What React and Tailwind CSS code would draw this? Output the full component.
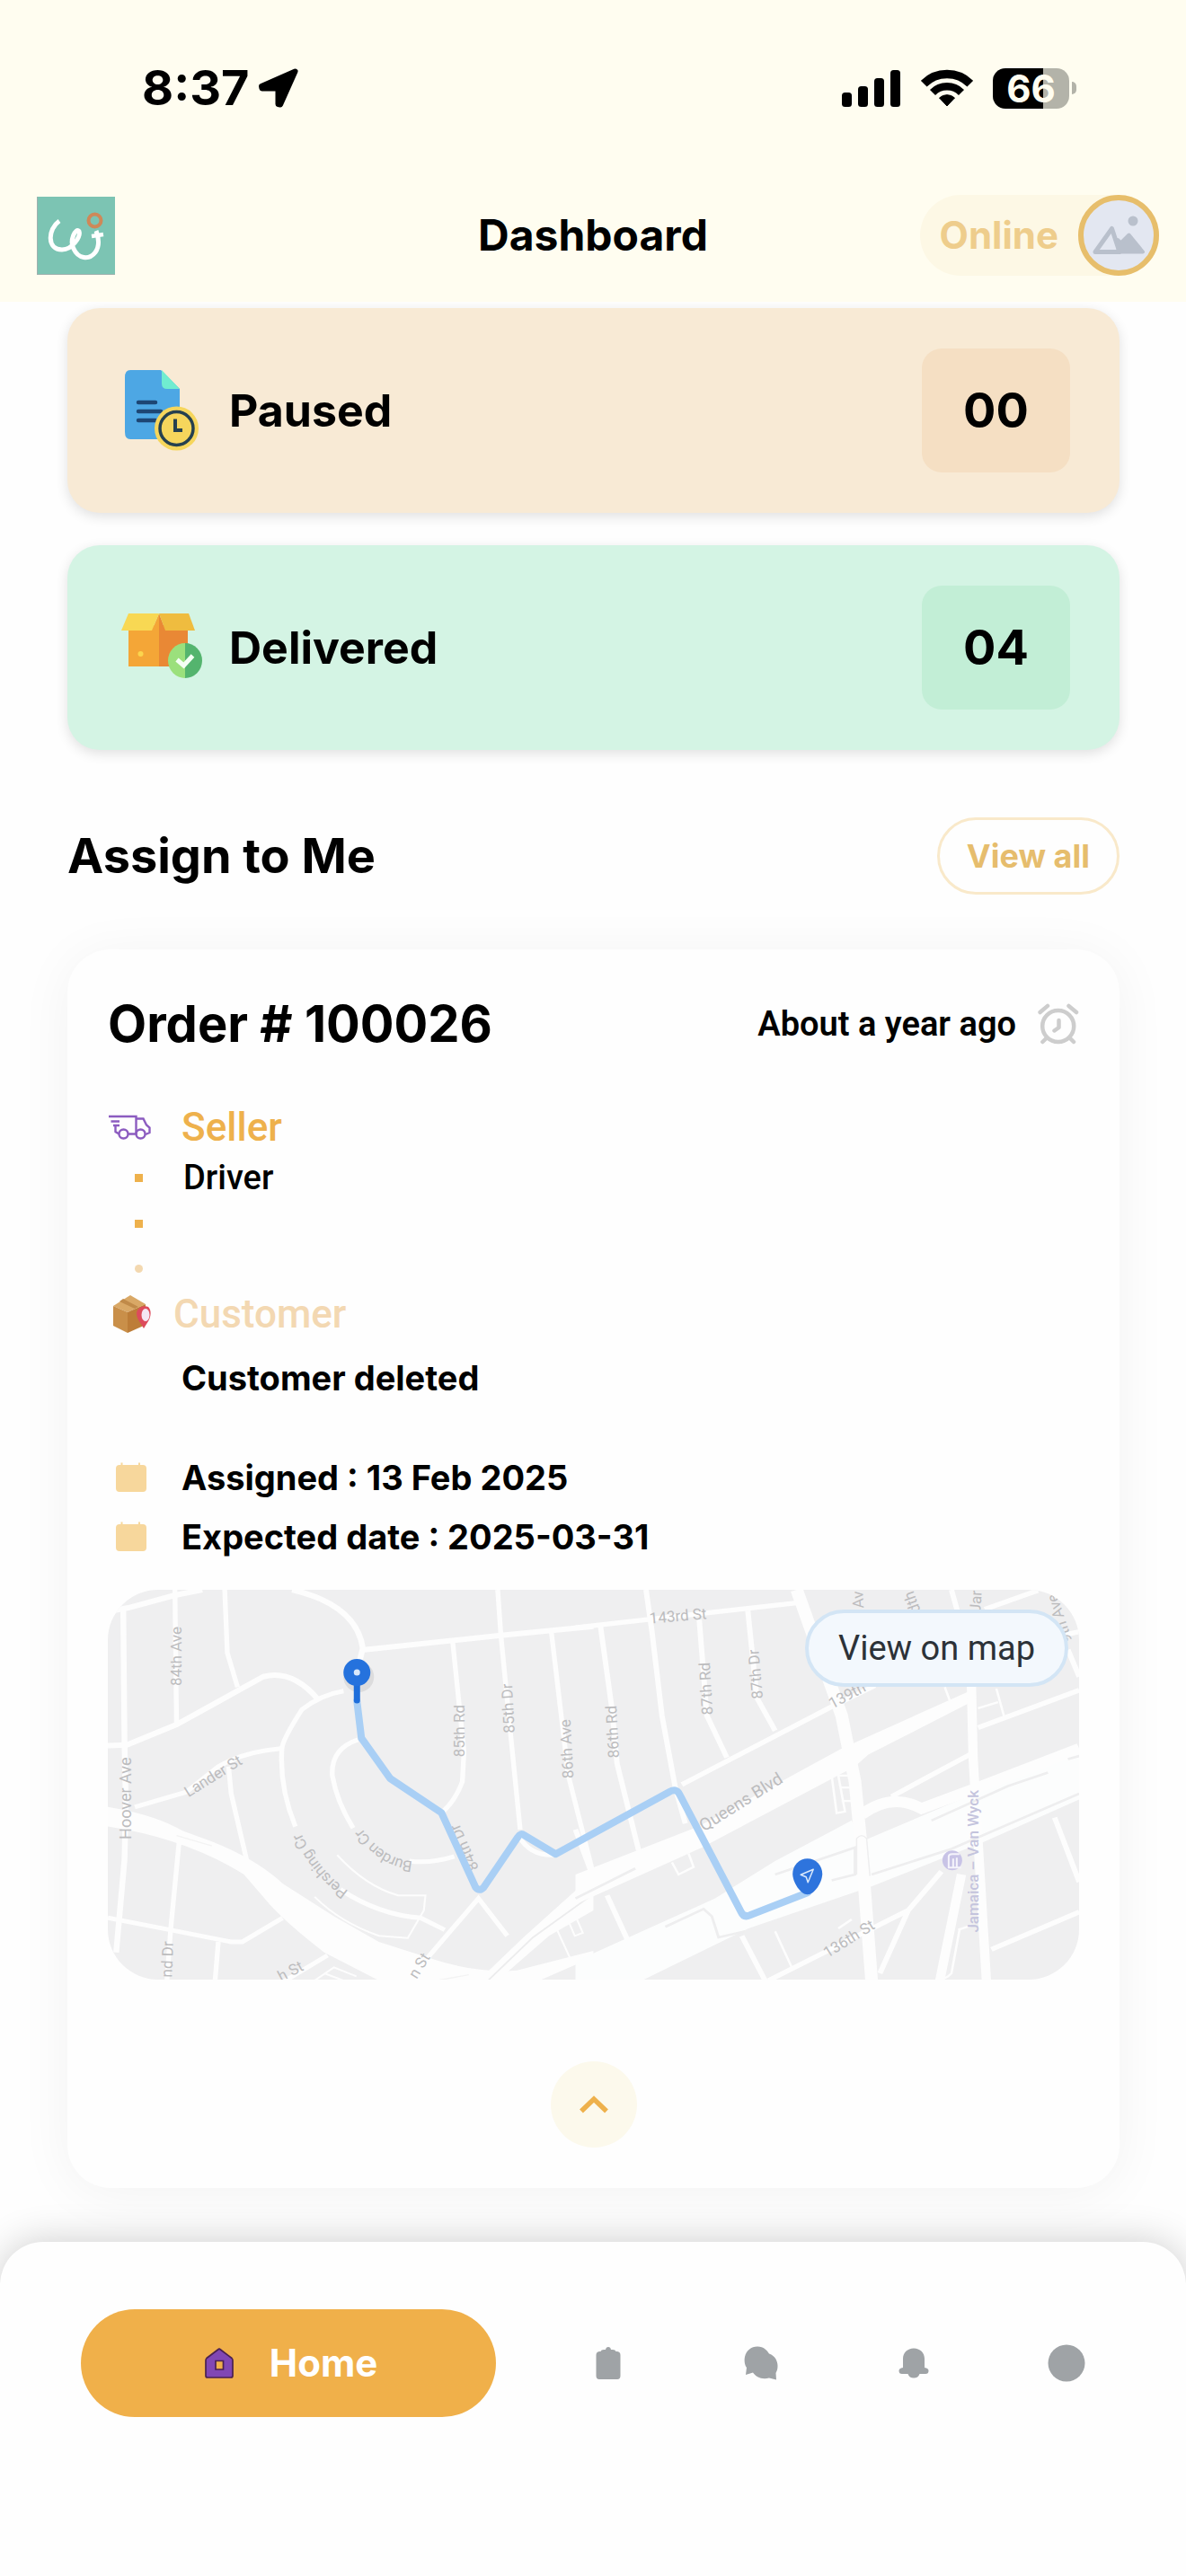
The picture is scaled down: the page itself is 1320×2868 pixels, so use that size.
import React from "react";

function LocationArrow() {
  return (
    <svg className="size-[46px]" viewBox="0 0 46 46" aria-hidden="true">
      <path d="M41.5 4.5 L4 21 L4.5 23.5 L22.5 23.5 L22.5 41 L25 41.5 Z" fill="#000" stroke="#000" strokeWidth="6" strokeLinejoin="round" />
    </svg>
  );
}

function SignalIcon() {
  return (
    <svg className="h-[42px] w-[66px]" viewBox="0 0 66 42" aria-hidden="true">
      <rect x="0" y="26" width="11" height="16" rx="3.5" />
      <rect x="18" y="19" width="11" height="23" rx="3.5" />
      <rect x="36" y="10" width="11" height="32" rx="3.5" />
      <rect x="54" y="1" width="11" height="41" rx="3.5" />
    </svg>
  );
}

function WifiIcon() {
  return (
    <svg className="h-[42px] w-[58px]" viewBox="0 0 58 42" fill="none" stroke="#000" aria-hidden="true">
      <path d="M3.2 16.2 A36.5 36.5 0 0 1 54.8 16.2" strokeWidth="9.5" />
      <path d="M13 26 A22.6 22.6 0 0 1 45 26" strokeWidth="8.5" />
      <path d="M29 41 L20.5 32 A12.5 12.5 0 0 1 37.5 32 Z" fill="#000" strokeWidth="1" />
    </svg>
  );
}

function Logo() {
  return (
    <svg className="ml-[11px] size-[87px]" viewBox="0 0 87 87" fill="none" role="img" aria-label="Logo">
      <rect width="87" height="87" fill="#7cc4b3" />
      <path d="M0 86.5 H87 M0.5 0 V87" stroke="#9fb0ae" />
      <path d="M25 27 C12 36 11 59 28 59 C40 59 49 44 47 38.5 C43 34 36 49 41 58 C46 69 58 71 65 62 C70 55 69 46 66 38" stroke="#fff" strokeWidth="5" />
      <path d="M61 44 L74 42" stroke="#fff" strokeWidth="4.5" />
      <circle cx="64.5" cy="26.5" r="7" stroke="#cf8858" strokeWidth="4" />
    </svg>
  );
}

function AvatarPicture() {
  return (
    <svg className="size-[90px]" viewBox="0 0 90 90" aria-hidden="true">
      <circle cx="45" cy="45" r="42" fill="#e3e7f1" stroke="#e7be6b" strokeWidth="6" />
      <circle cx="61" cy="29" r="5.5" fill="#b9c0cc" />
      <path d="M19 63.5 L37.5 37.5 L46 63.5 Z" fill="none" stroke="#b9c0cc" strokeWidth="5" strokeLinejoin="round" />
      <path d="M45 63.5 L44 50 L47.5 53.5 L56.5 44.5 L72 63.5 Z" fill="#b9c0cc" stroke="#b9c0cc" strokeWidth="4" strokeLinejoin="round" />
    </svg>
  );
}

function PausedIcon() {
  return (
    <svg className="h-[90px] w-[90px]" viewBox="0 0 90 90" aria-hidden="true">
      <path d="M10 0 H44 L65 21 V70 Q65 77 58 77 H10 Q4 77 4 69 V8 Q4 0 10 0 Z" fill="#4da7e4" />
      <path d="M45 0 L65 21 H51 Q45 21 45 15 Z" fill="#70ecd0" />
      <path d="M19 36 H38 M19 46 H44 M19 56 H38" stroke="#1d4674" strokeWidth="4.5" strokeLinecap="round" />
      <circle cx="61.5" cy="65" r="24.5" fill="#f6d65c" />
      <circle cx="61.5" cy="65" r="18.5" fill="none" stroke="#26414f" strokeWidth="3.5" />
      <path d="M60 54.5 V67 H68" fill="none" stroke="#26414f" strokeWidth="4" />
    </svg>
  );
}

function DeliveredIcon() {
  return (
    <svg className="h-[90px] w-[90px]" viewBox="0 0 90 90" aria-hidden="true">
      <g transform="translate(0 6)">
        <path d="M8 14 H42 V60 H8 Z" fill="#f4a637" />
        <path d="M42 14 H74 V60 H42 Z" fill="#e98835" />
        <path d="M42 1 L33 22 H42 Z" fill="#f4a637" />
        <path d="M42 1 L50 22 H42 Z" fill="#e98835" />
        <path d="M8 1 H42 L34 20 H0 Z" fill="#f8d853" />
        <path d="M42 1 H75 L82 20 H49 Z" fill="#efbc3f" />
        <circle cx="21.5" cy="46" r="3" fill="#fbd54e" />
        <path d="M71 34 A19 19.5 0 0 0 71 73 Z" fill="#9be07c" />
        <path d="M71 34 A19 19.5 0 0 1 71 73 Z" fill="#54b46e" />
        <path d="M62 52.5 L69.5 59 L79.5 48" fill="none" stroke="#f4fff4" strokeWidth="5" />
      </g>
    </svg>
  );
}

function AlarmIcon() {
  return (
    <svg className="size-[46px]" viewBox="0 0 46 46" fill="none" stroke="#cdcdcd" strokeWidth="4.5" strokeLinecap="round" strokeLinejoin="round" aria-hidden="true">
      <circle cx="22.7" cy="25.5" r="17.5" />
      <path d="M2.6 10 L11 2.9 M34.5 2.9 L43 10 M5.4 43 L10 38.5 M40 43 L35.5 38.5 M23.5 19 V27 L18.5 30.5" />
    </svg>
  );
}

function VanIcon() {
  return (
    <svg className="h-[28px] w-[48px]" viewBox="0 0 48 28" fill="none" stroke="#8c5cc0" strokeWidth="2.4" aria-hidden="true">
      <path d="M1 2 H31.5 V21.5 H22.5 M3.500 7.5 H13 M6 12 H13 M8.500 12 V19 L12.5 21.5 M31.5 4.5 H39.5 L43 11.5 L46.5 14.5 V20 L42 22" />
      <circle cx="17.5" cy="21.5" r="5" />
      <circle cx="36.5" cy="21.5" r="5" />
    </svg>
  );
}

function ParcelIcon() {
  return (
    <svg className="size-[42px]" viewBox="0 0 42 42" aria-hidden="true">
      <path d="M0 12 L19 0 L36 10 L16 19 Z" fill="#d9a866" />
      <path d="M0 12 L16 19 V42 L0 34 Z" fill="#c98f49" />
      <path d="M16 19 L36 10 V33 L16 42 Z" fill="#bd7d38" />
      <path d="M7 7 L24 15 L28 13 L11 4 Z" fill="#c08a49" />
      <path d="M34 37 C30 30 26 26 26 20 C27 13 34 11 39 13 C43 17 42 24 39 29 Z" fill="#dd4b5c" />
      <ellipse cx="36" cy="22" rx="4.5" ry="7" fill="#f4e6f4" />
    </svg>
  );
}

function CalendarIcon() {
  return (
    <svg className="h-[34px] w-[36px]" viewBox="0 0 36 34" aria-hidden="true">
      <path d="M5 3 H6.500 V0.500 H8.500 V3 H26 V0.500 H28 V3 H31 Q35 3 35 7 V29 Q35 33 31 33 H5 Q1 33 1 29 V7 Q1 3 5 3 Z" fill="#f7d79c" />
    </svg>
  );
}

function HouseIcon() {
  return (
    <svg className="h-[34px] w-[32px]" viewBox="0 0 32 34" aria-hidden="true">
      <path fillRule="evenodd" d="M14.500 2 Q16 0.500 17.500 2 L30 11.500 Q31 12.500 31 14 V31 Q31 33 29 33 H3 Q1 33 1 31 V14 Q1 12.500 2 11.500 Z M12 14.500 V24 H20.500 V14.500 Z" fill="#8147b4" stroke="#4a2150" strokeWidth="1.700" />
    </svg>
  );
}

function ClipboardIcon() {
  return (
    <svg className="h-[36px] w-[28px]" viewBox="0 0 28 36" fill="#9fa3a6" aria-hidden="true">
      <path d="M4 5 H5.500 Q6 3 9 3 H11 Q11.500 0 14 0 Q16.500 0 17 3 H19 Q22 3 22.500 5 H24 Q27.500 5.500 27.500 9 V32 Q27.500 36 24 36 H4 Q0.500 36 0.500 32 V9 Q0.500 5.500 4 5 Z" />
    </svg>
  );
}

function ChatIcon() {
  return (
    <svg className="h-[38px] w-[38px]" viewBox="0 0 38 38" fill="#9fa3a6" aria-hidden="true">
      <path d="M15 0.500 C22 0.500 26 5 28 8.500 C35 11 37.500 17 37.500 22 C37.500 25 37 27.500 35.500 30 L36 37.500 L28 35.500 C20 38 13 34 10 29.500 L2 32 L3 24 C0 20 0.500 14 1 12 C2.500 5 8 0.500 15 0.500 Z" />
    </svg>
  );
}

function BellIcon() {
  return (
    <svg className="h-[34px] w-[34px]" viewBox="0 0 34 34" fill="#9fa3a6" aria-hidden="true">
      <path d="M17 0.500 C24 0.500 29 5.500 29 12 V22 Q33.500 22.500 33.500 25.500 Q33.500 29 30 29 H23.500 Q22 33.500 17 33.500 Q12 33.500 10.500 29 H4 Q0.500 29 0.500 25.500 Q0.500 22.500 5 22 V12 C5 5.500 10 0.500 17 0.500 Z" />
    </svg>
  );
}

function ProfileIcon() {
  return (
    <svg className="size-[42px]" viewBox="0 0 42 42" aria-hidden="true">
      <circle cx="21" cy="21" r="20.500" fill="#9fa3a6" />
    </svg>
  );
}

const streetLabels = [
  { text: "84th Ave", x: 76, y: 74, angle: -90 },
  { text: "Hoover Ave", x: 19, y: 232, angle: -90, size: 18 },
  { text: "Lander St", x: 117, y: 207, angle: -32 },
  { text: "85th Rd", x: 391, y: 157, angle: -90 },
  { text: "85th Dr", x: 445, y: 132, angle: -93 },
  { text: "86th Ave", x: 510, y: 177, angle: -93 },
  { text: "84th Dr", x: 396, y: 287, angle: -114 },
  { text: "86th Rd", x: 561, y: 158, angle: -93 },
  { text: "87th Rd", x: 665, y: 110, angle: -93 },
  { text: "87th Dr", x: 720, y: 94, angle: -95 },
  { text: "143rd St", x: 634, y: 29, angle: -5 },
  { text: "139th", x: 822, y: 117, angle: -28 },
  { text: "Queens Blvd", x: 704, y: 236, angle: -32, size: 19 },
  { text: "136th St", x: 824, y: 388, angle: -32 },
  { text: "Av", x: 834, y: 11, angle: -93 },
  { text: "dth", x: 894, y: 14, angle: -110 },
  { text: "Jar", x: 965, y: 13, angle: -86 },
  { text: "9th Ave", x: 1058, y: 32, angle: -108 },
  { text: "nd Dr", x: 66, y: 411, angle: -88 },
  { text: "h St", x: 203, y: 424, angle: -28 },
  { text: "n St", x: 346, y: 418, angle: -58 },
];

function StreetMap() {
  return (
    <svg className="block w-full" viewBox="0 0 1080 434" fill="none" role="img" aria-label="Delivery route map">
      <defs>
        <path id="pershing" d="M264 340 Q222 310 202 255" />
        <path id="burden" d="M338 308 Q298 305 268 254" />
      </defs>
      <rect width="1080" height="434" fill="#efeff0" />

      {/* western streets */}
      <g transform="translate(-20 -20) scale(0.3571 0.3333)" stroke="#fdfdfd">
        <g strokeWidth="18">
          <path d="M78 128 L120 120 L265 78 L350 60" />
          <path d="M104 120 L108 575 L112 780 L108 960 L82 1270" />
          <path d="M56 580 L115 578 L270 510 L540 350 Q630 325 710 425" />
          <path d="M630 60 Q830 110 850 255 L835 320" />
          <path d="M855 260 L1280 212 L1568 182" />
        </g>
        <g strokeWidth="15">
          <path d="M265 60 L270 510" />
          <path d="M420 60 L428 270 L460 385" />
          <path d="M140 785 L300 735 L400 650 Q480 600 595 590" />
          <path d="M790 398 Q720 410 660 460 Q600 560 598 590 Q590 720 640 850 M780 1060 Q900 1145 1030 1155 L1105 1195" />
          <path d="M1270 60 L1280 212 L1310 540 L1340 860" />
          <path d="M1130 235 L1165 600 L1160 700 Q1140 760 1100 800" />
          <path d="M1437 200 L1490 680 L1568 1010" />
          <path d="M835 560 Q750 590 755 680 Q770 770 820 855 M995 965 Q1060 975 1135 950" />
          <path d="M432 650 L440 740 L490 970" />
          <path d="M278 900 L252 1190 L240 1364" />
          <path d="M56 1155 L250 1195 L440 1235 L475 1235 L600 1155" />
          <path d="M400 1235 L390 1364 M600 1370 L740 1280 M1050 1290 L1210 1090 L1300 1215" />
          <path d="M1335 880 Q1370 950 1450 945" />
        </g>
        <g strokeWidth="6">
          <path d="M770 945 Q860 1050 960 1080 L1045 1080 L1040 1130 L990 1222 L900 1215 Q780 1170 700 1085" />
          <path d="M700 1364 L760 1320 L830 1350 M730 1340 L790 1364 M1490 1165 L1510 1215 L1535 1205 L1515 1155" />
          <path d="M1455 1195 L1500 1300" />
        </g>
        <path d="M56 785 Q200 810 290 865 L380 900 Q520 960 600 1040 L760 1150 L900 1235 L1060 1290 Q1200 1340 1330 1330 L1568 1265 V1285 L1400 1364 H900 L730 1270 Q620 1180 560 1110 L480 1010 Q300 890 56 850 Z" fill="#fdfdfd" stroke="none" />
        <path d="M1210 1364 L1350 1220 L1568 1010 V1130 L1430 1215 L1270 1364 Z" fill="#fdfdfd" stroke="none" />
        <path d="M1240 1364 L1380 1220 L1568 1075" stroke="#ececed" strokeWidth="5" />
        <path d="M1080 1364 L1180 1345 M270 880 L380 915" stroke="#f3f3f3" strokeWidth="4" />
      </g>

      {/* eastern streets */}
      <g transform="translate(520 -20) scale(0.37 0.3333)" stroke="#fdfdfd">
        <path d="M0 1300 L200 1200 L420 1090 L600 965 L830 830 L860 900 L1200 740 L1514 590 V760 L1230 900 L890 1050 L520 1190 L200 1364 H0 Z" fill="#fcfdfd" stroke="none" />
        <path d="M0 1010 L370 850 L800 590 L1180 400 V440 L880 610 L840 650 L380 920 L0 1110 Z" fill="#fdfdfd" stroke="none" />
        <path d="M860 810 Q950 735 1040 790 L1210 720 L1514 590" strokeWidth="36" />
        <path d="M665 60 L710 200 L800 480 L840 700 L860 930 L890 1364" strokeWidth="38" />
        <path d="M1190 380 L1195 620 L1210 900 L1235 1364" strokeWidth="28" />
        <path d="M1160 1010 L1095 1364" strokeWidth="28" />
        <g strokeWidth="16">
          <path d="M0 186 L670 103" />
          <path d="M212 60 L230 200 L260 480 L300 720 L330 840" />
          <path d="M75 180 L110 460 L125 640 L190 930" />
          <path d="M372 160 L395 480 L455 620" />
          <path d="M518 130 L545 420 L600 530" />
          <path d="M320 710 L770 450 L900 380" />
          <path d="M0 860 L50 1010 M95 1080 L155 1225" />
          <path d="M1130 60 L1150 140 M1230 125 L1390 62 M1470 210 L1514 200 M1480 260 L1514 350" />
          <path d="M1210 520 L1514 395 M950 750 L1185 610" />
          <path d="M500 1215 L570 1364 M580 1364 L1000 1130 L1100 1000 M1000 1130 L915 1340" />
          <path d="M1250 1260 L1514 1135 M1440 820 L1514 1035" />
        </g>
        <g strokeWidth="7">
          <path d="M600 1200 L650 1320 M1110 385 L1125 430 M1265 390 L1290 490 M1210 455 L1270 435" />
          <path d="M770 680 L785 805 L810 800 L790 680 L830 680 M795 720 H825 M800 765 H830" />
          <path d="M290 970 L310 1010 L355 985 L340 940 M790 1190 L830 1160" />
          <path d="M1155 1190 L1130 1340 Q1110 1364 1100 1350 M1150 1195 L1190 1180" />
        </g>
        <g stroke="#eeeeef" strokeWidth="8">
          <path d="M600 1010 L840 920 L840 1010 L770 1030" />
          <path d="M890 1010 L1130 925 L1514 740" />
          <path d="M1070 830 L1300 715 L1420 670 M1480 625 L1514 615" />
          <path d="M0 1090 L180 990 M270 1185 L385 1125 L410 1150 L430 1220 L510 1200" />
          <path d="M845 1010 V890 Q860 870 875 890 L885 1015" strokeWidth="4" />
        </g>
      </g>

      <g fill="#bcbcbe" fontFamily="Roboto, sans-serif" textAnchor="middle">
        {streetLabels.map((label, i) => (
          <text key={i} x={label.x} y={label.y} fontSize={label.size || 17} dominantBaseline="central" transform={`rotate(${label.angle} ${label.x} ${label.y})`}>
            {label.text}
          </text>
        ))}
      </g>
      <g fill="#bcbcbe" fontFamily="Roboto, sans-serif" fontSize="17">
        <text dominantBaseline="central"><textPath href="#pershing">Pershing Cr</textPath></text>
        <text dominantBaseline="central"><textPath href="#burden">Burden Cr</textPath></text>
      </g>
      <text x="962" y="302" fontFamily="Roboto, sans-serif" fontSize="17" fontWeight="500" fill="#c4c4dd" textAnchor="middle" dominantBaseline="central" transform="rotate(-90 962 302)">
        Jamaica – Van Wyck
      </text>
      <circle cx="939" cy="301" r="11" fill="#c8c3e6" />
      <path d="M935 310 V297 Q935 294 939 294 H947 M940 309 V299 M944 309 V298 M934 309 H949" stroke="#f5f4fb" strokeWidth="2" />

      {/* route and pins */}
      <path d="M277 124 L282 165 L314 210 L371 248 L409 331 Q413 336 418 331 L456 275 Q459 270 463 273 L498 294 L624 225 Q632 220 636 228 L704 358 Q707 365 714 362 L778 337" stroke="#a9cff5" strokeWidth="8" strokeLinecap="round" strokeLinejoin="round" />
      <circle cx="279" cy="97" r="17" fill="#000" opacity="0.08" />
      <path d="M277 104 V123" stroke="#1e6edb" strokeWidth="7" strokeLinecap="round" />
      <circle cx="277" cy="92" r="15" fill="#2572dd" />
      <circle cx="277" cy="92" r="3.500" fill="#d8e8fb" />
      <path d="M778 339 C770 339 761.500 325 761.500 316 A16.500 17 0 0 1 794.500 316 C794.500 325 786 339 778 339 Z" fill="#2e74dd" />
      <path d="M784.500 311 L770.500 317 L776.500 319.500 L778.500 325.500 Z" stroke="#dbe9fb" strokeWidth="1.500" strokeLinejoin="round" />
    </svg>
  );
}

function StatCard({ icon, label, value, cardClass, badgeClass }) {
  return (
    <div className={`flex items-center justify-between rounded-[36px] py-[45px] pr-[55px] pl-[60px] shadow-[0_4px_14px_rgba(0,0,0,0.12)] ${cardClass}`}>
      <div className="flex items-center gap-[30px]">
        {icon}
        <h2 className="text-[50px] leading-[60px] font-bold">{label}</h2>
      </div>
      <div className={`flex h-[138px] w-[165px] items-center justify-center rounded-[22px] text-[54px] leading-[60px] font-bold ${badgeClass}`}>
        {value}
      </div>
    </div>
  );
}

function Dot({ className }) {
  return <span className={`ml-[30px] size-[9px] ${className}`} />;
}

export default function App() {
  return (
    <div className="flex min-h-screen flex-col bg-[#fefefe] font-['Inter',sans-serif] text-black">
      <header className="relative z-10 bg-[#fffdf0] pb-[8px]">
        <div className="flex h-[196px] items-center justify-between pr-[122px] pl-[158px]">
          <div className="flex items-center gap-[10px]">
            <time className="text-[54px] leading-[60px] font-bold">8:37</time>
            <LocationArrow />
          </div>
          <div className="flex items-center gap-[22px]">
            <SignalIcon />
            <WifiIcon />
            <div className="flex items-center gap-[3px]">
              <div className="flex h-[45px] w-[85px] items-center justify-center rounded-[14px] bg-[linear-gradient(90deg,#000_66%,#b3b3a9_66%)] text-[42px] leading-[45px] font-bold text-[#fffdf0]">
                66
              </div>
              <div className="h-[14px] w-[5px] rounded-r-full bg-[#b3b3a9]" />
            </div>
          </div>
        </div>
        <div className="grid h-[132px] grid-cols-[1fr_auto_1fr] items-center px-[30px]">
          <Logo />
          <h1 className="text-[48px] leading-[60px] font-bold">Dashboard</h1>
          <button className="flex h-[90px] items-center gap-[22px] justify-self-end rounded-full bg-[#fdf8e5] pl-[22px] text-[42px] leading-[60px] font-bold text-[#eecd8c]">
            Online
            <AvatarPicture />
          </button>
        </div>
      </header>

      <main className="pt-[7px] pr-[74px] pl-[75px]">
        <section className="flex flex-col gap-[36px]">
          <StatCard icon={<PausedIcon />} label="Paused" value="00" cardClass="bg-[#f8ead5]" badgeClass="bg-[#f5dfc3]" />
          <StatCard icon={<DeliveredIcon />} label="Delivered" value="04" cardClass="bg-[#d4f4e4]" badgeClass="bg-[#c2eed6]" />
        </section>

        <section>
          <div className="mt-[75px] flex items-center justify-between">
            <h2 className="text-[54px] leading-[60px] font-bold">Assign to Me</h2>
            <button className="h-[86px] rounded-full border-[3px] border-[#f9e9ca] px-[30px] text-[36px] leading-[60px] font-bold text-[#e6bd6d]">
              View all
            </button>
          </div>

          <article className="mt-[61px] rounded-[48px] bg-[#fefefe] px-[45px] pt-[43px] pb-[45px] shadow-[0_6px_60px_rgba(0,0,0,0.05)]">
            <div className="flex h-[80px] items-center justify-between">
              <h3 className="text-[56px] leading-[60px] font-bold">Order # 100026</h3>
              <div className="flex items-center gap-[24px] font-['Roboto',sans-serif] text-[38px] leading-[60px] font-semibold">
                About a year ago
                <AlarmIcon />
              </div>
            </div>

            <div className="mt-[47px] flex h-[56px] items-center gap-[34px] font-['Roboto',sans-serif]">
              <VanIcon />
              <span className="text-[44px] leading-[56px] font-medium text-[#eeb14c]">Seller</span>
            </div>
            <div className="flex h-[56px] items-center gap-[45px] font-['Roboto',sans-serif]">
              <Dot className="bg-[#eeb14c]" />
              <span className="text-[38px] leading-[56px] font-medium">Driver</span>
            </div>
            <div className="flex h-[46px] items-center">
              <Dot className="bg-[#eeb14c]" />
            </div>
            <div className="flex h-[54px] items-center">
              <Dot className="rounded-full bg-[#f3d8b0]" />
            </div>
            <div className="flex h-[48px] items-center gap-[25px] pl-[6px] font-['Roboto',sans-serif]">
              <ParcelIcon />
              <span className="text-[44px] leading-[48px] font-medium text-[#f3d8b2]">Customer</span>
            </div>
            <p className="mt-[23px] pl-[82px] text-[38px] leading-[48px] font-bold">Customer deleted</p>

            <div className="mt-[54px] text-[38px] leading-[66px] font-bold">
              <p className="flex items-center gap-[38px] pl-[8px]">
                <CalendarIcon />
                Assigned : 13 Feb 2025
              </p>
              <p className="flex items-center gap-[38px] pl-[8px]">
                <CalendarIcon />
                Expected date : 2025-03-31
              </p>
            </div>

            <div className="relative mt-[26px] overflow-hidden rounded-[56px]">
              <StreetMap />
              <button className="absolute top-[22px] right-[12px] h-[86px] rounded-full border-[4px] border-[#d3e5f5] bg-[#f3f8fd] px-[33px] font-['Roboto',sans-serif] text-[38px] leading-[60px] text-[#2c3238]">
                View on map
              </button>
            </div>

            <div className="mt-[91px] flex justify-center">
              <button aria-label="Collapse order" className="flex size-[96px] items-center justify-center rounded-full bg-[#fcf9ec]">
                <svg className="h-[22px] w-[34px]" viewBox="0 0 34 22" fill="none" aria-hidden="true">
                  <path d="M3 18.500 L17 5 L31 18.500" stroke="#eeb14c" strokeWidth="5.500" />
                </svg>
              </button>
            </div>
          </article>
        </section>
      </main>

      <nav className="relative mt-[60px] flex flex-1 items-start gap-[40px] rounded-t-[48px] bg-[#fefefe] pt-[75px] pr-[48px] pb-[177px] pl-[90px] shadow-[0_0_44px_rgba(0,0,0,0.2)]">
        <button className="flex h-[120px] w-[462px] items-center justify-center gap-[40px] rounded-full bg-[#f0b04a] pl-[6px] text-[42px] leading-[60px] font-bold text-white">
          <HouseIcon />
          Home
        </button>
        <div className="grid h-[120px] flex-1 grid-cols-4">
          <button aria-label="Orders" className="flex items-center justify-center"><ClipboardIcon /></button>
          <button aria-label="Messages" className="flex items-center justify-center"><ChatIcon /></button>
          <button aria-label="Notifications" className="flex items-center justify-center"><BellIcon /></button>
          <button aria-label="Profile" className="flex items-center justify-center"><ProfileIcon /></button>
        </div>
      </nav>
    </div>
  );
}
